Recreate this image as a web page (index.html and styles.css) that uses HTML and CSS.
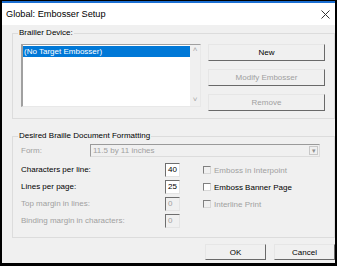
FILE: index.html
```html
<!DOCTYPE html>
<html lang="en">
<head>
    <meta charset="UTF-8">
    <title>Global: Embosser Setup</title>
    <link rel="stylesheet" href="styles.css">
</head>
<body>
    <div class="window">
        <div class="titlebar">
            <span class="title">Global: Embosser Setup</span>
            <svg class="close" width="9" height="9" viewBox="0 0 9 9">
                <path d="M0.5 0.5 L8.5 8.5 M8.5 0.5 L0.5 8.5" stroke="#333" stroke-width="1" fill="none"/>
            </svg>
        </div>

        <div class="content">
            <fieldset class="group device">
                <legend>Brailler Device:</legend>
                <div class="device-row">
                    <div class="listbox">
                        <div class="list-items">
                            <div class="list-item selected">(No Target Embosser)</div>
                        </div>
                        <div class="scrollbar">
                            <span class="arrow">&#x2C4;</span>
                            <span class="arrow">&#x2C5;</span>
                        </div>
                    </div>
                    <div class="device-buttons">
                        <button class="btn">New</button>
                        <button class="btn" disabled>Modify Embosser</button>
                        <button class="btn" disabled>Remove</button>
                    </div>
                </div>
            </fieldset>

            <fieldset class="group formatting">
                <legend>Desired Braille Document Formatting</legend>
                <div class="form-row">
                    <span class="label disabled">Form:</span>
                    <div class="combo">
                        <span class="combo-text">11.5 by 11 inches</span>
                        <span class="combo-arrow">&#x25BE;</span>
                    </div>
                </div>
                <div class="fields">
                    <span class="label">Characters per line:</span>
                    <span class="input">40</span>
                    <label class="check disabled"><span class="box"></span>Emboss in Interpoint</label>

                    <span class="label">Lines per page:</span>
                    <span class="input">25</span>
                    <label class="check"><span class="box"></span>Emboss Banner Page</label>

                    <span class="label disabled">Top margin in lines:</span>
                    <span class="input off">0</span>
                    <label class="check disabled"><span class="box"></span>Interline Print</label>

                    <span class="label disabled">Binding margin in characters:</span>
                    <span class="input off">0</span>
                    <span></span>
                </div>
            </fieldset>

            <div class="footer">
                <button class="btn small">OK</button>
                <button class="btn small">Cancel</button>
            </div>
        </div>
    </div>
</body>
</html>
```

FILE: styles.css
```css
* {
    margin: 0;
    padding: 0;
    box-sizing: border-box;
    font-family: "Liberation Sans", Arial, sans-serif;
}

body {
    background-color: #000;
    width: 337px;
    height: 266px;
    overflow: hidden;
}

.window {
    width: 333px;
    height: 262px;
    margin: 1px 0 0 2px;
    background-color: #f0f0f0;
    border-top: 2px solid #1b6fd2;
}

.titlebar {
    height: 22px;
    background-color: #fff;
    display: flex;
    justify-content: space-between;
    align-items: center;
    padding: 0 5px 0 4px;
    font-size: 9.2px;
    color: #000;
}

.content {
    padding: 3px 0 0 10px;
}

.group {
    border: 1px solid #dcdcdc;
    font-size: 8px;
    color: #000;
}

.group legend {
    margin-left: -3px;
    padding: 0 1px;
    line-height: 10px;
}

.device {
    padding: 6px 7px 7px 8px;
}

.device-row {
    display: flex;
    gap: 7px;
}

.listbox {
    width: 180px;
    height: 63px;
    background-color: #fff;
    border-top: 1px solid #a0a0a0;
    border-left: 2px solid #a0a0a0;
    border-bottom: 1px solid #e8e8e8;
    border-right: 1px solid #e8e8e8;
    display: flex;
}

.list-items {
    flex: 1;
    padding-top: 1px;
}

.list-item {
    height: 11px;
    line-height: 11px;
    padding-left: 1px;
}

.list-item.selected {
    background-color: #0078d7;
    color: #fff;
}

.scrollbar {
    width: 10px;
    background-color: #f0f0f0;
    display: flex;
    flex-direction: column;
    justify-content: space-between;
    align-items: center;
    padding: 1px 0 2px;
}

.arrow {
    color: #a8a8a8;
    font-size: 8px;
    line-height: 8px;
}

.device-buttons {
    display: flex;
    flex-direction: column;
    gap: 8px;
}

.btn {
    width: 117px;
    height: 17px;
    background-color: #f0f0f0;
    border: 1px solid;
    border-color: #e6e6e6 #696969 #696969 #e6e6e6;
    font-size: 8px;
    color: #000;
}

.btn:disabled {
    color: #a0a0a0;
}

.formatting {
    margin-top: 12px;
    padding: 3px 14px 9px 8px;
}

.form-row {
    display: flex;
    align-items: center;
    height: 13px;
}

.label {
    line-height: 10px;
}

.label.disabled,
.check.disabled {
    color: #a0a0a0;
}

.form-row .label {
    width: 69px;
}

.combo {
    flex: 1;
    height: 13px;
    border: 1px solid;
    border-color: #9a9a9a #dcdcdc #dcdcdc #9a9a9a;
    display: flex;
    align-items: center;
    justify-content: space-between;
    padding-left: 2px;
    color: #a0a0a0;
}

.combo-arrow {
    width: 9px;
    height: 9px;
    margin-right: 1px;
    border: 1px solid #c8c8c8;
    font-size: 7px;
    line-height: 7px;
    text-align: center;
    color: #909090;
}

.fields {
    display: grid;
    grid-template-columns: 121px 15px 1fr;
    column-gap: 23px;
    row-gap: 3px;
    align-items: center;
    margin-top: 6px;
}

.input {
    height: 14px;
    background-color: #fff;
    border: 1px solid;
    border-color: #6e6e6e #e4e4e4 #e4e4e4 #6e6e6e;
    padding-left: 2px;
    line-height: 12px;
}

.input.off {
    background-color: #f0f0f0;
    color: #a0a0a0;
}

.check {
    display: flex;
    align-items: center;
    gap: 3px;
}

.box {
    width: 8px;
    height: 8px;
    border: 1px solid;
    border-color: #808080 #d8d8d8 #d8d8d8 #808080;
    background-color: #fff;
}

.check.disabled .box {
    background-color: #f0f0f0;
}

.footer {
    display: flex;
    justify-content: flex-end;
    gap: 8px;
    margin-top: 6px;
}

.btn.small {
    width: 61px;
    height: 16px;
}
```
